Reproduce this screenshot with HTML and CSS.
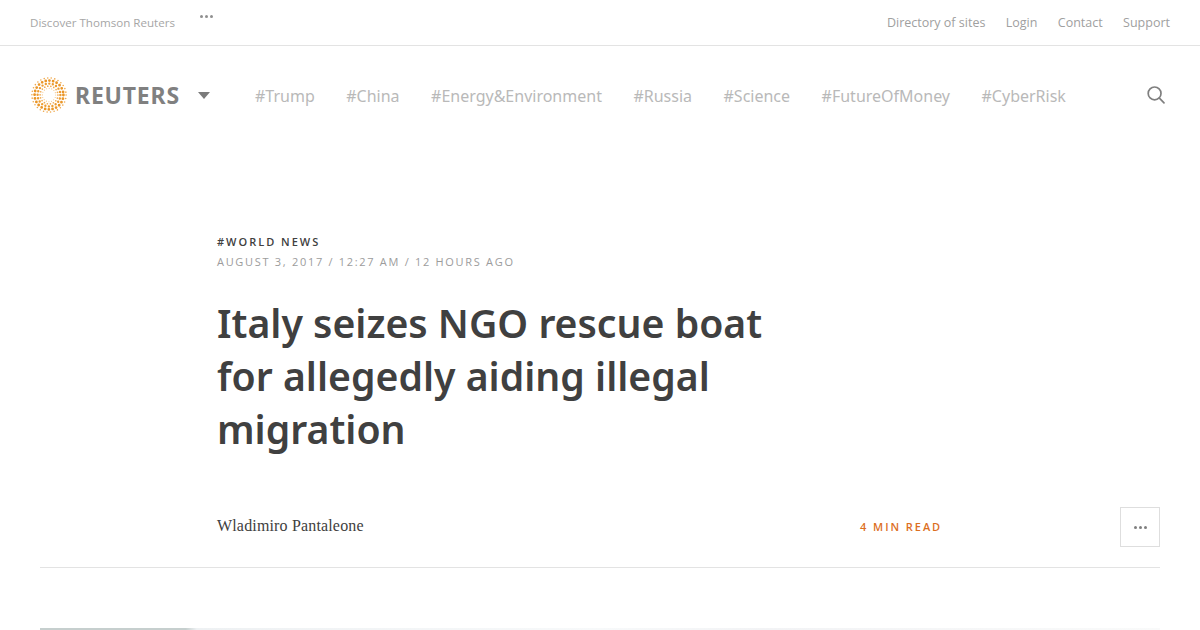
FILE: index.html
```html
<!DOCTYPE html>
<html lang="en">
<head>
<meta charset="utf-8">
<title>Italy seizes NGO rescue boat for allegedly aiding illegal migration</title>
<link rel="stylesheet" href="styles.css">
</head>
<body>
<header>
  <div class="topbar">
    <div class="topbar-left">
      <a class="discover">Discover Thomson Reuters</a>
      <span class="dots dots-top"><i></i><i></i><i></i></span>
    </div>
    <nav class="topbar-right">
      <a>Directory of sites</a><a>Login</a><a>Contact</a><a>Support</a>
    </nav>
  </div>
  <div class="mainbar">
    <div class="brand">
      <svg class="logo" width="38" height="36" viewBox="0 0 38 36" fill="none" stroke-linecap="round">
        <circle cx="19" cy="18" r="17.1" stroke="#f0a84a" stroke-width="1.6" stroke-dasharray="0 3.58"/>
        <circle cx="19" cy="18" r="14.4" stroke="#ea9526" stroke-width="2.8" stroke-dasharray="0 3.77"/>
        <circle cx="19" cy="18" r="11.4" stroke="#ed9c30" stroke-width="2.4" stroke-dasharray="0 3.58"/>
        <circle cx="19" cy="18" r="8.9" stroke="#f0aa50" stroke-width="1.7" stroke-dasharray="0 3.11"/>
        <circle cx="19" cy="18" r="6.7" stroke="#f4c07c" stroke-width="1.1" stroke-dasharray="0 2.63"/>
      </svg>
      <span class="wordmark">REUTERS</span>
      <span class="caret"></span>
    </div>
    <nav class="tags">
      <a>#Trump</a><a>#China</a><a>#Energy&amp;Environment</a><a>#Russia</a><a>#Science</a><a>#FutureOfMoney</a><a>#CyberRisk</a>
    </nav>
    <svg class="search" width="20" height="20" viewBox="0 0 20 20" fill="none" stroke="#7f7f7f" stroke-width="1.7" stroke-linecap="round">
      <circle cx="8.6" cy="8.4" r="6.4"/>
      <path d="M13.4 13.2 18 17.8"/>
    </svg>
  </div>
</header>
<main>
  <article class="article">
    <div class="kicker">#WORLD NEWS</div>
    <div class="date">AUGUST 3, 2017 / 12:27 AM / 12 HOURS AGO</div>
    <h1>Italy seizes NGO rescue boat for allegedly aiding illegal migration</h1>
  </article>
  <div class="byline">
    <span class="author">Wladimiro Pantaleone</span>
    <span class="readtime">4 MIN READ</span>
    <button class="more"><span class="dots"><i></i><i></i><i></i></span></button>
  </div>
  <div class="hero"></div>
</main>
</body>
</html>
```
FILE: styles.css
```css
* { box-sizing: border-box; }
html, body { margin: 0; height: 630px; overflow: hidden; background: #fff; }
body { font-family: "Open Sans", "Liberation Sans", sans-serif; }
.topbar {
  height: 46px;
  border-bottom: 1px solid #e3e3e3;
  padding: 0 30px;
  display: flex;
  justify-content: space-between;
  align-items: center;
  color: #a3a3a3;
}
.topbar-left { display: flex; align-items: center; gap: 25px; }
.discover { font-size: 11.6px; color: #a6a6a6; }
.topbar-right { display: flex; gap: 20.4px; font-size: 12.5px; color: #a0a0a0; }
.dots { display: flex; gap: 2px; }
.dots i { width: 3px; height: 3px; border-radius: 50%; background: #8f8f8f; display: block; }
.dots-top { transform: translateY(-6px); }
.mainbar { height: 98px; padding: 0 34px 0 30px; display: flex; align-items: center; }
.brand { display: flex; align-items: center; width: 225px; flex: none; }
.logo { flex: none; margin-right: 7px; }
.wordmark { font-family: "Noto Sans", sans-serif; font-weight: 700; font-size: 23px; letter-spacing: .8px; color: #808080; }
.caret { width: 0; height: 0; margin-left: 18px; border: 6px solid transparent; border-top: 7px solid #7b7b7b; border-bottom: 0; }
.tags { display: flex; gap: 31.5px; margin-top: 2px; font-family: "Noto Sans", sans-serif; font-size: 16px; color: #b9b9b9; flex: 1; }
.search { flex: none; }
.article { padding: 0 0 0 217px; margin-top: 90px; }
.kicker { font-family: "Open Sans", sans-serif; font-weight: 600; font-size: 11px; line-height: 16px; letter-spacing: 2px; color: #404040; }
.date { font-family: "Open Sans", sans-serif; font-size: 11px; line-height: 16px; letter-spacing: 1.7px; color: #9c9c9c; margin-top: 4px; }
h1 { margin: 26px 0 0; width: 570px; font-family: "Noto Sans", sans-serif; font-weight: 600; font-size: 39.2px; line-height: 53px; color: #404040; }
.byline {
  margin: 40px 40px 0;
  height: 73px;
  border-bottom: 1px solid #e3e3e3;
  padding: 12px 0 0 177px;
  display: flex;
  align-items: flex-start;
}
.author { font-family: "Liberation Serif", serif; font-size: 16px; line-height: 38px; letter-spacing: .16px; color: #404040; width: 643px; flex: none; }
.readtime { font-family: "Open Sans", sans-serif; font-weight: 600; font-size: 11px; line-height: 40px; letter-spacing: 1.95px; color: #dc6f1f; flex: 1; }
.more { width: 40px; height: 40px; padding: 0; background: #fff; border: 1px solid #dedede; display: flex; align-items: center; justify-content: center; }
.more .dots i { background: #7f7f7f; }
.hero {
  margin: 60px 40px 0;
  height: 2px;
  background: linear-gradient(90deg, #c6cfce 0, #c6cfce 13%, #eef1f3 14%, #f7f9fa 50%, #f2f3f5 65%, #f9fafa 100%);
}
```
